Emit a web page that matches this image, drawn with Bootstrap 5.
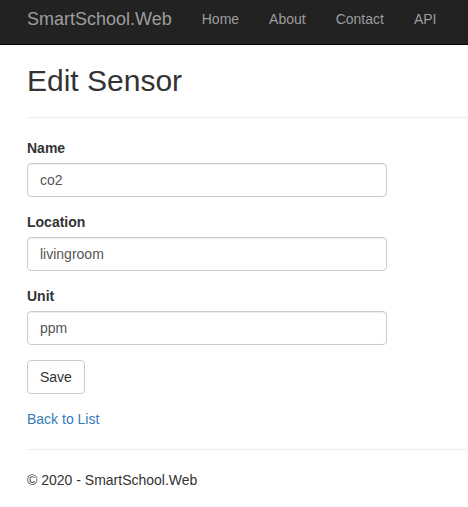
<!DOCTYPE html>
<html lang="en">
<head>
<meta charset="utf-8">
<meta name="viewport" content="width=device-width, initial-scale=1">
<title>Edit Sensor - SmartSchool.Web</title>
<link href="https://cdn.jsdelivr.net/npm/bootstrap@5.3.0/dist/css/bootstrap.min.css" rel="stylesheet">
<style>
body { font-family: "Liberation Sans", Arial, sans-serif; font-size: 14px; line-height: 20px; color: #333; background: #fff; }
.site-nav { background: #222; border-bottom: 1px solid #080808; padding: 0 0 6px 27px; }
.site-nav .navbar-brand { font-size: 18px; line-height: 20px; color: #9d9d9d; padding: 9px 0; margin-right: 15px; }
.site-nav .navbar-nav .nav-link { color: #9d9d9d; line-height: 20px; padding: 9px 15px; }
.site-nav .navbar-brand:hover, .site-nav .navbar-nav .nav-link:hover { color: #fff; }
.page-body { padding-left: 27px; }
.page-title { font-size: 30px; line-height: 33px; font-weight: 400; margin: 19px 0 20px; }
.rule { border-top: 1px solid #eee; opacity: 1; margin: 20px 0; }
.field { margin-bottom: 15px; max-width: 360px; }
.field label { display: block; font-weight: 700; margin-bottom: 5px; }
.field .form-control { font-size: 14px; line-height: 20px; height: 34px; padding: 6px 12px; color: #555; border: 1px solid #ccc; border-radius: 4px; box-shadow: inset 0 1px 1px rgba(0,0,0,.075); }
.save-btn { font-size: 14px; line-height: 20px; padding: 6px 12px; color: #333; background: #fff; border: 1px solid #ccc; border-radius: 4px; margin-bottom: 15px; }
.back-link { color: #337ab7; }
</style>
</head>
<body>
<nav class="navbar navbar-expand site-nav">
  <a class="navbar-brand" href="#">SmartSchool.Web</a>
  <ul class="navbar-nav">
    <li class="nav-item"><a class="nav-link" href="#">Home</a></li>
    <li class="nav-item"><a class="nav-link" href="#">About</a></li>
    <li class="nav-item"><a class="nav-link" href="#">Contact</a></li>
    <li class="nav-item"><a class="nav-link" href="#">API</a></li>
  </ul>
</nav>
<main class="page-body">
  <h2 class="page-title">Edit Sensor</h2>
  <hr class="rule">
  <form>
    <div class="field"><label for="name">Name</label><input class="form-control" id="name" type="text" value="co2"></div>
    <div class="field"><label for="location">Location</label><input class="form-control" id="location" type="text" value="livingroom"></div>
    <div class="field"><label for="unit">Unit</label><input class="form-control" id="unit" type="text" value="ppm"></div>
    <button class="btn save-btn" type="submit">Save</button>
  </form>
  <a class="back-link d-block text-decoration-none" href="#">Back to List</a>
</main>
<footer class="page-body">
  <hr class="rule">
  <p class="mb-0">© 2020 - SmartSchool.Web</p>
</footer>
<script src="https://cdn.jsdelivr.net/npm/bootstrap@5.3.0/dist/js/bootstrap.bundle.min.js"></script>
</body>
</html>
